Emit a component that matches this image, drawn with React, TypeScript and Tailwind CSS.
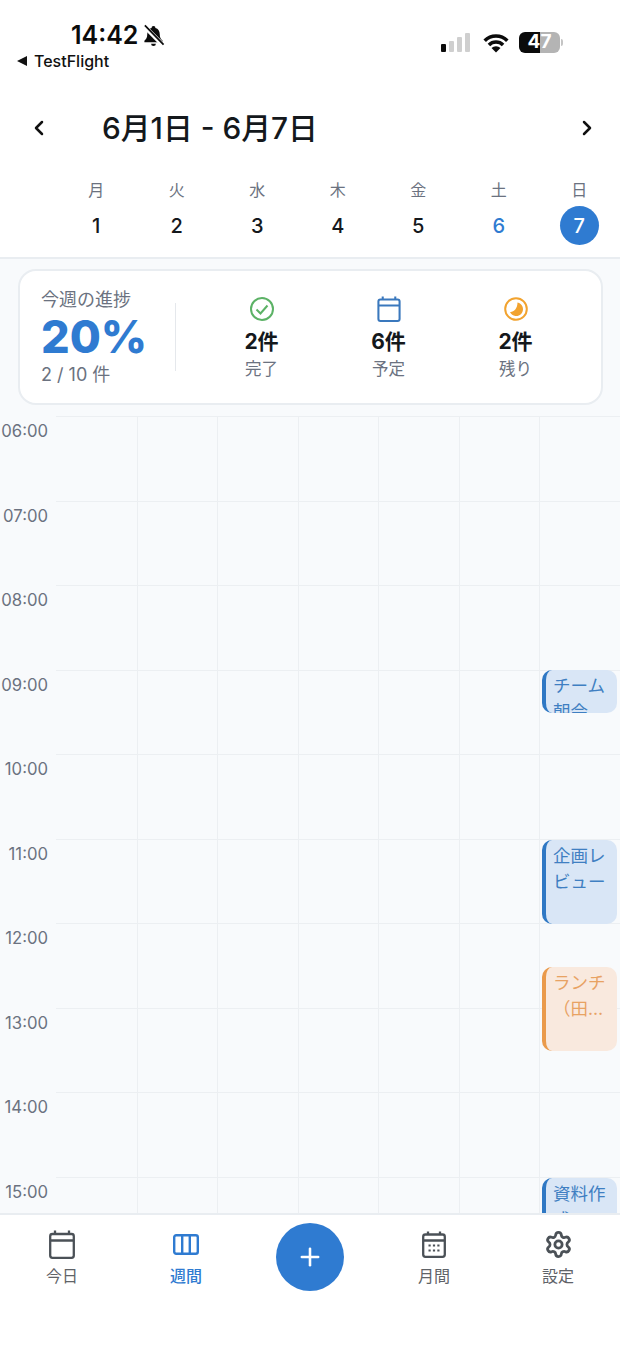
import { ChevronLeft, ChevronRight, Plus, Settings } from "lucide-react";

const FONT = "font-['Inter','Noto_Sans_CJK_JP',sans-serif]";

const DAYS = [
  { label: "月", num: "1" },
  { label: "火", num: "2" },
  { label: "水", num: "3" },
  { label: "木", num: "4" },
  { label: "金", num: "5" },
  { label: "土", num: "6" },
  { label: "日", num: "7" },
];

const HOURS = ["06:00", "07:00", "08:00", "09:00", "10:00", "11:00", "12:00", "13:00", "14:00", "15:00"];

const EVENTS: Record<string, { title: string; top: string; height: string; color: "blue" | "orange" }> = {
  "09:00": { title: "チーム朝会", top: "-top-[1px]", height: "h-[43px]", color: "blue" },
  "11:00": { title: "企画レビュー", top: "top-0", height: "h-[84px]", color: "blue" },
  "12:00": { title: "ランチ（田…", top: "top-[43px]", height: "h-[84px]", color: "orange" },
  "15:00": { title: "資料作成", top: "top-0", height: "h-[84px]", color: "blue" },
};

function CalendarIcon({ className, color }: { className: string; color: string }) {
  return (
    <svg viewBox="0 0 26 29" className={className} fill="none" stroke={color} strokeWidth="2.3">
      <rect x="1.2" y="4" width="23.6" height="23.8" rx="2.2" />
      <path d="M1.2 10.5h23.6M6 0.5v3.5M20 0.5v3.5" />
    </svg>
  );
}

function StatusBar() {
  return (
    <div className="flex h-[96px] shrink-0 justify-between pl-[17px] pr-[57px] pt-[20px]">
      <div className="flex flex-col">
        <div className="flex items-center pl-[54px]">
          <span className="text-[25px] leading-[30px] font-semibold text-[#0b0b0b]">14:42</span>
          <svg viewBox="0 0 24 24" className="ml-[4px] h-[23px] w-[23px]">
            <path d="M12 2a2 2 0 0 1 2 2.2c3 .8 4.5 3.3 4.5 6.3 0 4 1.2 5.3 3 7V19h-19v-1.500c1.800-1.700 3-3 3-7 0-3 1.500-5.500 4.500-6.300A2 2 0 0 1 12 2z" fill="#0b0b0b" />
            <path d="M9.500 20.500h5a2.500 2.500 0 0 1-5 0z" fill="#0b0b0b" />
            <path d="M2.500 2.500l19 19" stroke="#fff" strokeWidth="4.500" />
            <path d="M3 1.500l19.500 20" stroke="#0b0b0b" strokeWidth="1.800" />
          </svg>
        </div>
        <div className="mt-[1px] flex items-center gap-[7px]">
          <span className="h-0 w-0 border-y-[5px] border-r-[10px] border-y-transparent border-r-[#111]" />
          <span className="text-[16px] leading-[20px] font-medium text-[#111]">TestFlight</span>
        </div>
      </div>
      <div className="flex items-center gap-[12px] self-start pt-[12px]">
        <div className="flex items-end gap-[3px]">
          <span className="h-[8px] w-[5px] rounded-[1px] bg-[#0b0b0b]" />
          <span className="h-[11px] w-[5px] rounded-[1px] bg-[#cfcfcf]" />
          <span className="h-[15px] w-[5px] rounded-[1px] bg-[#cfcfcf]" />
          <span className="h-[19px] w-[5px] rounded-[1px] bg-[#cfcfcf]" />
        </div>
        <svg viewBox="0 0 28 20" className="h-[20px] w-[28px]" fill="none" stroke="#0b0b0b" strokeWidth="3.600">
          <path d="M2.700 7.700a16 16 0 0 1 22.600 0" />
          <path d="M6.930 11.930a10 10 0 0 1 14.140 0" />
          <path d="M14 19.500l-4.500-4.500a6.400 6.400 0 0 1 9 0z" fill="#0b0b0b" stroke="none" />
        </svg>
        <div className="-ml-[3px] flex items-center">
          <div className="flex h-[21px] w-[41px] items-center justify-center rounded-[6px] bg-[linear-gradient(90deg,#0b0b0b_0,#0b0b0b_50%,#b4b4b4_50%,#b4b4b4_100%)] text-[19px] font-bold text-white">
            47
          </div>
          <span className="ml-[1px] h-[7px] w-[2px] rounded-r-sm bg-[#c4c4c4]" />
        </div>
      </div>
    </div>
  );
}

function WeekHeader() {
  return (
    <div className="shrink-0 border-b-2 border-[#e9edf1] bg-white">
      <div className="flex h-[64px] items-center justify-between pl-[27px] pr-[21px]">
        <div className="flex items-center">
          <ChevronLeft className="h-[24px] w-[24px] text-[#111]" strokeWidth={2.5} />
          <span className="ml-[51px] text-[29.8px] leading-[36px] font-medium text-[#14181c]">6月1日 - 6月7日</span>
        </div>
        <ChevronRight className="h-[24px] w-[24px] text-[#111]" strokeWidth={2.5} />
      </div>
      <div className="grid grid-cols-[repeat(7,80.5px)] pb-[12px] pl-[56px] pt-[19px]">
        {DAYS.map((d) => (
          <div key={d.label} className="flex flex-col items-center">
            <span className="text-[16px] leading-[22px] text-[#6b7280]">{d.label}</span>
            <span
              className={
                d.num === "7"
                  ? "mt-[5px] flex h-[39px] w-[39px] items-center justify-center rounded-full bg-[#2f7bd1] text-[20px] font-medium text-white"
                  : d.num === "6"
                    ? "mt-[5px] flex h-[39px] w-[39px] items-center justify-center text-[20px] font-medium text-[#2f7bd1]"
                    : "mt-[5px] flex h-[39px] w-[39px] items-center justify-center text-[20px] font-medium text-[#14181c]"
              }
            >
              {d.num}
            </span>
          </div>
        ))}
      </div>
    </div>
  );
}

function Stat({ icon, value, label }: { icon: React.ReactNode; value: string; label: string }) {
  return (
    <div className="flex w-[127px] flex-col items-center">
      <div className="flex h-[28px] items-center justify-center">{icon}</div>
      <span className="mt-[5px] text-[21px] leading-[27px] font-bold text-[#14181c]">{value}</span>
      <span className="mt-[4px] text-[16.5px] leading-[20px] text-[#6b7280]">{label}</span>
    </div>
  );
}

function ProgressCard() {
  return (
    <div className="ml-[18px] mr-[17px] mt-[10px] flex h-[136px] items-center rounded-[18px] border-2 border-[#e9edf1] bg-white pl-[21px]">
      <div className="w-[134px]">
        <div className="text-[18px] leading-[22px] text-[#6b7280]">今週の進捗</div>
        <div className="text-[45px] leading-[52px] font-extrabold text-[#2f7bd1]">20%</div>
        <div className="text-[18px] leading-[23px] text-[#6b7280]">2 / 10 件</div>
      </div>
      <div className="h-[68px] w-[1px] bg-[#e5e8ec]" />
      <div className="ml-[22px] flex">
        <Stat
          value="2件"
          label="完了"
          icon={
            <svg viewBox="0 0 24 24" className="h-[24px] w-[24px]" fill="none" stroke="#5cb266" strokeWidth="2">
              <circle cx="12" cy="12" r="11" />
              <path d="M6.500 12.500l4 4 7-8" />
            </svg>
          }
        />
        <Stat value="6件" label="予定" icon={<CalendarIcon className="h-[26px] w-[24px]" color="#3a78bd" />} />
        <Stat
          value="2件"
          label="残り"
          icon={
            <svg viewBox="0 0 24 24" className="h-[24px] w-[24px]">
              <circle cx="12" cy="12" r="10.800" fill="none" stroke="#f2a32f" strokeWidth="2" />
              <path d="M13.500 5.500a6.800 6.800 0 1 1-7.500 9.500c3.500.500 7.500-3.500 7.500-9.500z" fill="#f2a32f" />
            </svg>
          }
        />
      </div>
    </div>
  );
}

function EventBlock({ title, top, height, color }: { title: string; top: string; height: string; color: "blue" | "orange" }) {
  return (
    <div
      className={
        color === "blue"
          ? `absolute left-[2px] right-[3px] z-10 overflow-hidden rounded-[10px] border-l-4 border-[#2f78c4] bg-[#d9e6f6] pl-[7px] pr-[4px] pt-[3px] text-[17.5px] leading-[26px] text-[#3f7fc2] ${top} ${height}`
          : `absolute left-[2px] right-[3px] z-10 overflow-hidden rounded-[10px] border-l-4 border-[#ea9a4b] bg-[#f9e9de] pl-[7px] pr-[4px] pt-[3px] text-[17.5px] leading-[26px] text-[#e8a263] ${top} ${height}`
      }
    >
      {title}
    </div>
  );
}

function TimeGrid() {
  return (
    <div className="mt-[11px] min-h-0 flex-1 overflow-hidden">
      {HOURS.map((h) => (
        <div key={h} className="flex h-[84.5px]">
          <div className="w-[56px] shrink-0 pr-[8px] pt-[4px] text-right text-[16.7px] leading-[22px] text-[#6b7280]">{h}</div>
          <div className="grid flex-1 grid-cols-[repeat(7,80.5px)]">
            {DAYS.map((d, i) => (
              <div
                key={d.label}
                className={
                  i === 0
                    ? "relative border-t border-[#eceff2]"
                    : "relative border-l border-t border-[#eceff2]"
                }
              >
                {i === 6 && EVENTS[h] && <EventBlock {...EVENTS[h]} />}
              </div>
            ))}
          </div>
        </div>
      ))}
    </div>
  );
}

function NavItem({ icon, label, active }: { icon: React.ReactNode; label: string; active?: boolean }) {
  return (
    <div className="flex w-[124px] flex-col items-center">
      <div className="flex h-[34px] items-center justify-center">{icon}</div>
      <span className={active ? "mt-[5px] text-[16px] leading-[20px] font-medium text-[#2f7bd1]" : "mt-[5px] text-[16px] leading-[20px] text-[#5f6368]"}>
        {label}
      </span>
    </div>
  );
}

function BottomNav() {
  return (
    <div className="z-20 flex h-[134px] shrink-0 items-start border-t-2 border-[#e9edf1] bg-white pt-[12px]">
      <NavItem label="今日" icon={<CalendarIcon className="h-[29px] w-[26px]" color="#4b5157" />} />
      <NavItem
        label="週間"
        active
        icon={
          <svg viewBox="0 0 26 21" className="h-[21px] w-[26px]" fill="none" stroke="#2f7bd1" strokeWidth="2.400">
            <rect x="1.200" y="1.200" width="23.600" height="18.600" rx="2" />
            <path d="M9.200 1.200v18.600M16.800 1.200v18.600" />
          </svg>
        }
      />
      <div className="-mt-[4px] flex w-[124px] justify-center">
        <div className="flex h-[68px] w-[68px] items-center justify-center rounded-full bg-[#2f7bd1]">
          <Plus className="h-[28px] w-[28px] text-white" strokeWidth={2.2} />
        </div>
      </div>
      <NavItem
        label="月間"
        icon={
          <svg viewBox="0 0 24 27" className="h-[27px] w-[24px]" fill="none" stroke="#4b5157" strokeWidth="2.300">
            <rect x="1.200" y="3.500" width="21.600" height="22.300" rx="2.200" />
            <path d="M1.200 9.500h21.600M6 0.500v3M18 0.500v3" />
            <path d="M6.500 14.500h2.200M10.900 14.500h2.200M15.300 14.500h2.200M6.500 19.500h2.200M10.900 19.500h2.200M15.300 19.500h2.200" strokeWidth="2.200" />
          </svg>
        }
      />
      <NavItem label="設定" icon={<Settings className="h-[29px] w-[29px] text-[#4b5157]" strokeWidth={2.3} />} />
    </div>
  );
}

export default function App() {
  return (
    <div className={`flex h-[1347px] w-[620px] flex-col overflow-hidden bg-[#f8fafc] ${FONT}`}>
      <div className="shrink-0 bg-white">
        <StatusBar />
        <WeekHeader />
      </div>
      <ProgressCard />
      <TimeGrid />
      <BottomNav />
    </div>
  );
}
